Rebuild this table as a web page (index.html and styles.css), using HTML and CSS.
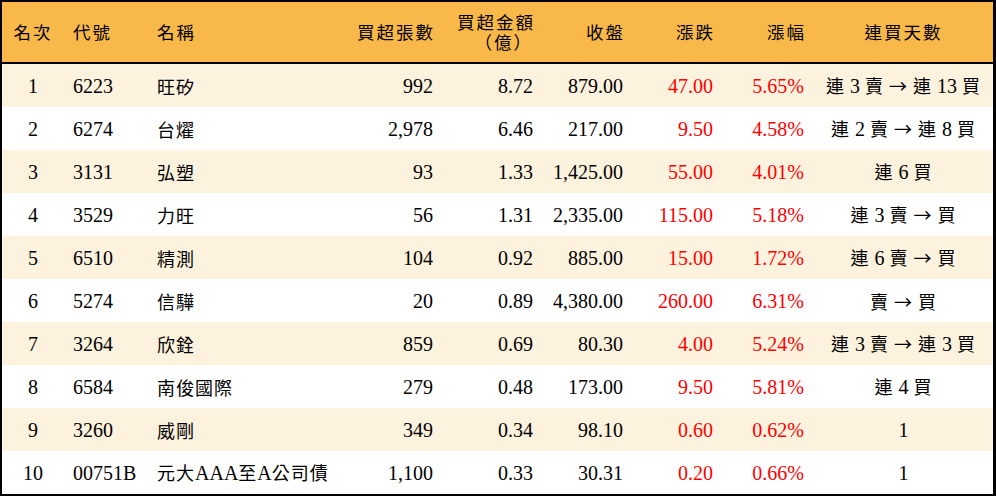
FILE: index.html
```html
<!DOCTYPE html>
<html lang="zh-Hant">
<head>
<meta charset="utf-8">
<title>買超排行</title>
<link rel="stylesheet" href="styles.css">
</head>
<body>
<table class="rank">
  <colgroup>
    <col class="w-rank"><col class="w-code"><col class="w-name"><col class="w-vol"><col class="w-amt"><col class="w-close"><col class="w-chg"><col class="w-pct"><col class="w-days">
  </colgroup>
  <thead>
    <tr>
      <th class="c zh">名次</th>
      <th class="l zh">代號</th>
      <th class="l zh">名稱</th>
      <th class="r zh">買超張數</th>
      <th class="r zh two"><span class="line">買超金額</span><span class="line paren">（億）</span></th>
      <th class="r zh">收盤</th>
      <th class="r zh">漲跌</th>
      <th class="r zh">漲幅</th>
      <th class="c zh">連買天數</th>
    </tr>
  </thead>
  <tbody>
    <tr><td class="c">1</td><td class="l">6223</td><td class="l zh">旺矽</td><td class="r">992</td><td class="r">8.72</td><td class="r">879.00</td><td class="r up">47.00</td><td class="r up">5.65%</td><td class="c zh">連 <span class="n">3</span> 賣 → 連 <span class="n">13</span> 買</td></tr>
    <tr><td class="c">2</td><td class="l">6274</td><td class="l zh">台燿</td><td class="r">2,978</td><td class="r">6.46</td><td class="r">217.00</td><td class="r up">9.50</td><td class="r up">4.58%</td><td class="c zh">連 <span class="n">2</span> 賣 → 連 <span class="n">8</span> 買</td></tr>
    <tr><td class="c">3</td><td class="l">3131</td><td class="l zh">弘塑</td><td class="r">93</td><td class="r">1.33</td><td class="r">1,425.00</td><td class="r up">55.00</td><td class="r up">4.01%</td><td class="c zh">連 <span class="n">6</span> 買</td></tr>
    <tr><td class="c">4</td><td class="l">3529</td><td class="l zh">力旺</td><td class="r">56</td><td class="r">1.31</td><td class="r">2,335.00</td><td class="r up">115.00</td><td class="r up">5.18%</td><td class="c zh">連 <span class="n">3</span> 賣 → 買</td></tr>
    <tr><td class="c">5</td><td class="l">6510</td><td class="l zh">精測</td><td class="r">104</td><td class="r">0.92</td><td class="r">885.00</td><td class="r up">15.00</td><td class="r up">1.72%</td><td class="c zh">連 <span class="n">6</span> 賣 → 買</td></tr>
    <tr><td class="c">6</td><td class="l">5274</td><td class="l zh">信驊</td><td class="r">20</td><td class="r">0.89</td><td class="r">4,380.00</td><td class="r up">260.00</td><td class="r up">6.31%</td><td class="c zh">賣 → 買</td></tr>
    <tr><td class="c">7</td><td class="l">3264</td><td class="l zh">欣銓</td><td class="r">859</td><td class="r">0.69</td><td class="r">80.30</td><td class="r up">4.00</td><td class="r up">5.24%</td><td class="c zh">連 <span class="n">3</span> 賣 → 連 <span class="n">3</span> 買</td></tr>
    <tr><td class="c">8</td><td class="l">6584</td><td class="l zh">南俊國際</td><td class="r">279</td><td class="r">0.48</td><td class="r">173.00</td><td class="r up">9.50</td><td class="r up">5.81%</td><td class="c zh">連 <span class="n">4</span> 買</td></tr>
    <tr><td class="c">9</td><td class="l">3260</td><td class="l zh">威剛</td><td class="r">349</td><td class="r">0.34</td><td class="r">98.10</td><td class="r up">0.60</td><td class="r up">0.62%</td><td class="c"><span class="n">1</span></td></tr>
    <tr><td class="c">10</td><td class="l">00751B</td><td class="l zh">元大<span class="n">AAA</span>至<span class="n">A</span>公司債</td><td class="r">1,100</td><td class="r">0.33</td><td class="r">30.31</td><td class="r up">0.20</td><td class="r up">0.66%</td><td class="c"><span class="n">1</span></td></tr>
  </tbody>
</table>
</body>
</html>
```
FILE: styles.css
```css
html, body {
  margin: 0;
  padding: 0;
  background: #ffffff;
}

.rank {
  width: 996px;
  table-layout: fixed;
  border-collapse: separate;
  border-spacing: 0;
  border-style: solid;
  border-color: #000;
  border-width: 2px 3px 2px 2px;
  font-family: "Liberation Serif", "Noto Sans CJK TC", serif;
  font-size: 20px;
  color: #000;
}

.w-rank { width: 62px; }
.w-code { width: 84px; }
.w-name { width: 202px; }
.w-vol { width: 93px; }
.w-amt { width: 100px; }
.w-close { width: 90px; }
.w-chg { width: 90px; }
.w-pct { width: 91px; }
.w-days { width: 179px; }

.rank th,
.rank td {
  padding: 0;
  vertical-align: middle;
  white-space: nowrap;
  overflow: hidden;
}

.rank thead th {
  height: 60px;
  background: #f9b84a;
  font-weight: normal;
  border-bottom: 2px solid #000;
  line-height: 20px;
}

.line {
  display: block;
  line-height: 18px;
}

.paren {
  margin-top: 2px;
  margin-right: 2px;
}

.rank tbody tr {
  height: 43px;
}

.rank tbody tr:nth-child(odd) td {
  background: #fdf2dd;
}

.rank td {
  line-height: 22px;
}

.c { text-align: center; }
.l { text-align: left; padding-left: 9px !important; }
.r { text-align: right; padding-right: 10px !important; }

.zh {
  font-family: "Noto Sans CJK TC", "Liberation Serif", sans-serif;
  font-size: 18px;
  letter-spacing: 1px;
}

.rank th.zh {
  font-size: 17.5px;
  letter-spacing: 2px;
}

.rank th.r.zh {
  padding-right: 8px !important;
}

.n {
  font-family: "Liberation Serif", serif;
  font-size: 20px;
  letter-spacing: 0;
}

.up { color: #ff0000; }
```
